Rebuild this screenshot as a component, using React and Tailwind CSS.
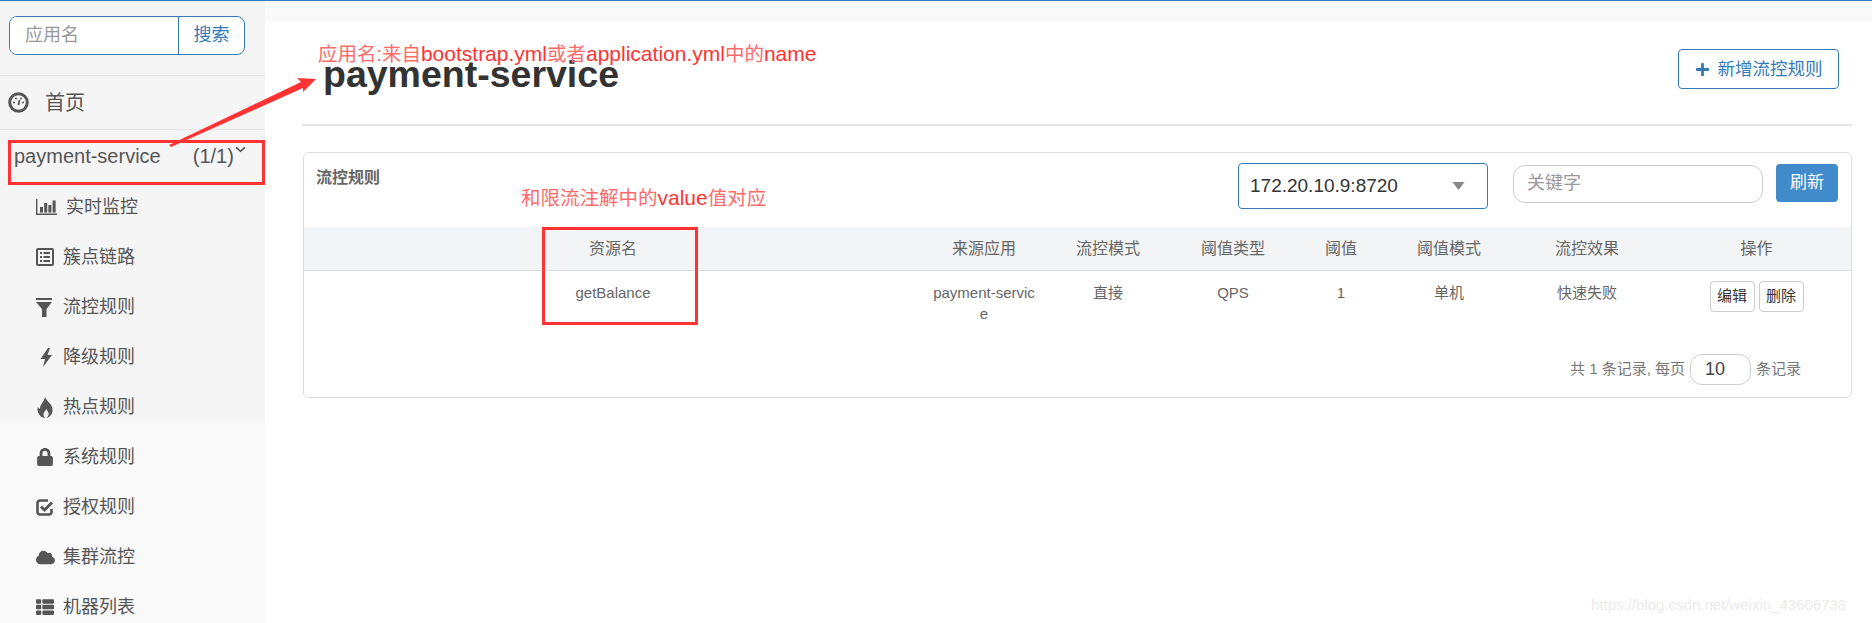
import { FaLock, FaCloud, FaThList, FaPlus } from "react-icons/fa";

const fontStack = "font-['Liberation_Sans','Noto_Sans_CJK_SC',sans-serif]";

// hand drawn, the icon packages only carry the newer shapes of these
function BarsIcon() {
  return (
    <svg viewBox="0 0 21 16" className="w-[21px] h-[16px]" fill="#555">
      <path d="M0 0h1.4v14.6H21V16H0z" />
      <rect x="4" y="8" width="3" height="5.5" />
      <rect x="8.2" y="4" width="3" height="9.5" />
      <rect x="12.4" y="6" width="3" height="7.5" />
      <rect x="16.6" y="1.5" width="3" height="12" />
    </svg>
  );
}

function ListIcon() {
  return (
    <svg viewBox="0 0 18 18" className="w-[18px] h-[18px]">
      <rect x="1" y="1" width="16" height="16" rx="1" fill="none" stroke="#555" strokeWidth="2" />
      <path d="M4 5h2M7.5 5H14M4 9h2M7.5 9H14M4 13h2M7.5 13H14" stroke="#555" strokeWidth="2" />
    </svg>
  );
}

function FilterIcon() {
  return (
    <svg viewBox="0 0 16 19" className="w-[16px] h-[19px]" fill="#555">
      <rect x="0" y="0" width="16" height="2" />
      <path d="M0 4h16l-5.5 7v8H6v-8z" />
    </svg>
  );
}

function BoltIcon() {
  return (
    <svg viewBox="0 0 12 19" className="w-[12px] h-[19px] ml-[4px]" fill="#555">
      <path d="M8 0 L0.5 11 H5 L3 19 L12 7 H7.5 L10 0 Z" />
    </svg>
  );
}

function FlameIcon() {
  return (
    <svg viewBox="0 0 16 21" className="w-[16px] h-[21px] ml-[1px]" fill="#555">
      <path
        fillRule="evenodd"
        d="M8 0c1 3 4 5 6 8 2 3 2.500 8-1 11-1 1-2.500 2-4 2 2-1 3-3 2.500-5-.3-1.500-1.500-2.500-2-4-1 1.500-3 3-3 5.500 0 1.500.7 2.800 1.800 3.500-2 0-4-.8-5.800-3C.5 15 0 12 1 10c.5 1 1 1.500 2 2C2.500 8 7 5 8 0z"
      />
    </svg>
  );
}

function CheckIcon() {
  return (
    <svg viewBox="0 0 18 18" className="w-[18px] h-[18px]" fill="none" stroke="#555">
      <path d="M15.500 11v3a2.500 2.500 0 0 1-2.500 2.500H4A2.500 2.500 0 0 1 1.500 14V5A2.500 2.500 0 0 1 4 2.500h8" strokeWidth="2.600" />
      <path d="M5 8.500l3.500 3.500L16 4.500" strokeWidth="3" />
    </svg>
  );
}

const menu = [
  { label: "实时监控", icon: <BarsIcon />, gap: "ml-[9px]" },
  { label: "簇点链路", icon: <ListIcon />, gap: "ml-[7px]" },
  { label: "流控规则", icon: <FilterIcon />, gap: "ml-[7px]" },
  { label: "降级规则", icon: <BoltIcon />, gap: "ml-[7px]" },
  { label: "热点规则", icon: <FlameIcon />, gap: "ml-[7px]" },
  { label: "系统规则", icon: <FaLock className="text-[18px]" />, gap: "ml-[7px]" },
  { label: "授权规则", icon: <CheckIcon />, gap: "ml-[7px]" },
  { label: "集群流控", icon: <FaCloud className="text-[19px]" />, gap: "ml-[7px]" },
  { label: "机器列表", icon: <FaThList className="text-[18px]" />, gap: "ml-[7px]" },
];

const headers = ["资源名", "来源应用", "流控模式", "阈值类型", "阈值", "阈值模式", "流控效果", "操作"];
const cells = ["getBalance", "payment-service", "直接", "QPS", "1", "单机", "快速失败"];

function Sidebar() {
  return (
    <aside className="w-[265px] shrink-0 h-[622px] bg-[linear-gradient(#f5f5f5_421px,#f9f9f9_421px)] text-[#555]">
      <div className="pl-[9px] pt-[15px] pb-[20px] border-b border-[#e5e5e5]">
        <div className="flex w-[236px] h-[39px] border border-[#337ab7] rounded-[8px] bg-white overflow-hidden">
          <input
            readOnly
            placeholder="应用名"
            className="w-[168px] pl-[15px] text-[18px] outline-none placeholder:text-[#999] bg-white"
          />
          <button className="flex-1 border-l border-[#337ab7] text-[18px] text-[#337ab7]">搜索</button>
        </div>
      </div>
      <div className="h-[54px] flex items-center pl-[8px] border-b border-[#e5e5e5]">
        <svg viewBox="0 0 21 21" className="w-[21px] h-[21px]">
          <circle cx="10.500" cy="10.500" r="8.800" fill="none" stroke="#555" strokeWidth="3" />
          <circle cx="6" cy="10.500" r="1" fill="#555" />
          <circle cx="8" cy="6.500" r="1" fill="#555" />
          <circle cx="13" cy="6.500" r="1" fill="#555" />
          <circle cx="15" cy="10.500" r="1" fill="#555" />
          <path d="M10.500 13 L11.500 8" stroke="#555" strokeWidth="1.800" />
        </svg>
        <span className="ml-[16px] text-[20px]">首页</span>
      </div>
      <div className="h-[52px] flex items-start pl-[14px] pt-[12px] text-[20px] leading-[28px]">
        <span>payment-service</span>
        <span className="ml-[32px]">(1/1)</span>
        <svg viewBox="0 0 10 6" className="w-[11px] h-[7px] mt-[4px] ml-[1px]">
          <path d="M1 1 L5 4.600 L9 1" fill="none" stroke="#555" strokeWidth="1.500" />
        </svg>
      </div>
      {menu.map(({ label, icon, gap }) => (
        <div key={label} className="h-[50px] flex items-center pl-[36px]">
          <span className="min-w-[20px] flex">{icon}</span>
          <span className={`${gap} text-[18px]`}>{label}</span>
        </div>
      ))}
    </aside>
  );
}

function RulesPanel() {
  return (
    <section className="ml-[38px] mr-[20px] mt-[26px] h-[246px] border border-[#ddd] rounded-[6px] bg-white">
      <div className="h-[74px] flex items-start text-[#666]">
        <h3 className="ml-[12px] mt-[15px] text-[16px] font-bold leading-[20px]">流控规则</h3>
        <div className="ml-auto mt-[10px] flex items-start">
          <div className="w-[250px] h-[46px] flex items-center justify-between border border-[#337ab7] rounded-[4px] pl-[11px] pr-[22px] text-[19px] text-[#333]">
            <span>172.20.10.9:8720</span>
            <svg viewBox="0 0 12 8" className="w-[13px] h-[8px]">
              <path d="M0 0 H12 L6 8 Z" fill="#888" />
            </svg>
          </div>
          <input
            readOnly
            placeholder="关键字"
            className="ml-[25px] mt-[2px] w-[250px] h-[38px] border border-[#ccc] rounded-[12px] pl-[13px] pb-[2px] text-[18px] outline-none placeholder:text-[#999]"
          />
          <button className="ml-[13px] mr-[13px] mt-[1px] w-[62px] h-[38px] rounded-[4px] bg-[#428bca] text-white text-[17px]">
            刷新
          </button>
        </div>
      </div>
      <table className="w-full table-fixed text-center text-[15px] text-[#666]">
        <colgroup>
          <col className="w-[618px]" />
          <col className="w-[124px]" />
          <col className="w-[124px]" />
          <col className="w-[126px]" />
          <col className="w-[90px]" />
          <col className="w-[126px]" />
          <col className="w-[150px]" />
          <col />
        </colgroup>
        <thead>
          <tr className="h-[43px] bg-[#f3f4f5] border-b border-[#ddd]">
            {headers.map((h) => (
              <th key={h} className="pt-[2px] font-normal text-[16px]">
                {h}
              </th>
            ))}
          </tr>
        </thead>
        <tbody>
          <tr className="align-top">
            {cells.map((c) => (
              <td key={c} className="pt-[11px] px-[10px] leading-[21px] break-all">
                {c}
              </td>
            ))}
            <td className="pt-[10px]">
              <div className="flex justify-center gap-[4px]">
                <button className="w-[45px] h-[31px] border border-[#ccc] rounded-[4px] text-[#333] text-[15px]">编辑</button>
                <button className="w-[45px] h-[31px] border border-[#ccc] rounded-[4px] text-[#333] text-[15px]">删除</button>
              </div>
            </td>
          </tr>
        </tbody>
      </table>
      <div className="mt-[30px] pr-[50px] flex items-center justify-end text-[15px] text-[#777]">
        <span>共 1 条记录, 每页</span>
        <input
          readOnly
          value="10"
          className="mx-[5px] w-[61px] h-[31px] border border-[#ccc] rounded-[12px] pl-[14px] text-[18px] text-[#444] outline-none"
        />
        <span>条记录</span>
      </div>
    </section>
  );
}

function Annotations() {
  return (
    <>
      <div className="absolute left-[8px] top-[140px] w-[257px] h-[45px] border-[3px] border-[#ff3333]" />
      <svg className="absolute left-0 top-0 w-[340px] h-[160px]" viewBox="0 0 340 160">
        <path d="M169 145 L301 82 L297 78 L316 79 L303 92 L303 88 L171 147 Z" fill="#ff3333" />
      </svg>
      <div className="absolute left-[318px] top-[40px] text-[19.500px] leading-[28px] text-[#ff3333] whitespace-nowrap">
        <span className="text-[#ff6a6a]">应用名:来自</span>
        <span className="text-[21px]">bootstrap.yml</span>
        <span className="text-[#ff6a6a]">或者</span>
        <span className="text-[21px]">application.yml</span>
        <span className="text-[#ff6a6a]">中的</span>
        <span className="text-[21px]">name</span>
      </div>
      <div className="absolute left-[521px] top-[184px] text-[19.500px] leading-[28px] text-[#ff3333] whitespace-nowrap">
        <span className="text-[#ff6a6a]">和限流注解中的</span>
        <span className="text-[21px]">value</span>
        <span className="text-[#ff6a6a]">值对应</span>
      </div>
      <div className="absolute left-[542px] top-[227px] w-[156px] h-[98px] border-[3px] border-[#ff3333]" />
      <div className="absolute left-[1591px] top-[596px] text-[15px] leading-[18px] text-[#ebebeb] whitespace-nowrap">
        https://blog.csdn.net/weixin_43606738
      </div>
    </>
  );
}

export default function App() {
  return (
    <div className={`relative w-[1872px] h-[623px] overflow-hidden bg-white ${fontStack}`}>
      <div className="h-px bg-[#337ab7]" />
      <div className="flex">
        <Sidebar />
        <main className="flex-1 min-w-0 h-[622px] bg-[#f9f9f9] pt-[21px]">
          <div className="h-full bg-white">
            <div className="ml-[37px] mr-[20px] h-[104px] border-b-2 border-[#e5e5e5] flex items-start justify-between">
              <h1 className="mt-[30px] ml-[21px] text-[37.500px] leading-[44px] font-bold text-[#333]">payment-service</h1>
              <button className="mt-[27px] mr-[13px] w-[161px] h-[40px] flex items-center justify-center border border-[#337ab7] rounded-[4px] text-[#337ab7] text-[17.500px]">
                <FaPlus className="text-[15px] mr-[8px]" />
                新增流控规则
              </button>
            </div>
            <RulesPanel />
          </div>
        </main>
      </div>
      <Annotations />
    </div>
  );
}
